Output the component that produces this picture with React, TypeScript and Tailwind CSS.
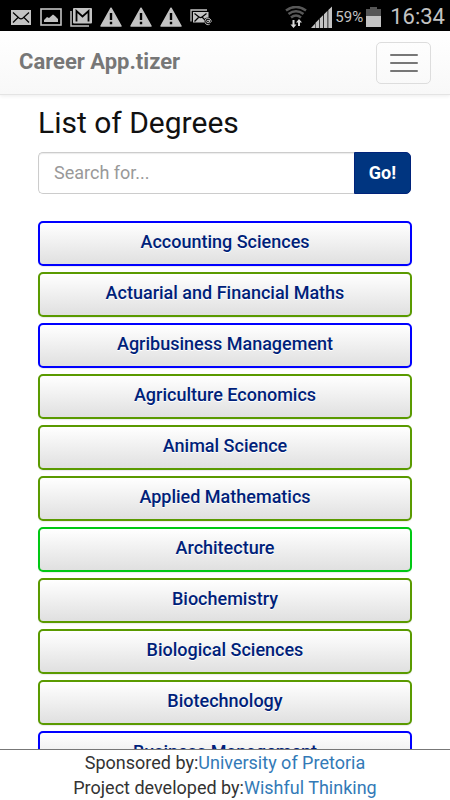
import React from 'react'

const degrees = [
  { name: 'Accounting Sciences', border: 'border-[#0000ff]' },
  { name: 'Actuarial and Financial Maths', border: 'border-[#5a9a00]' },
  { name: 'Agribusiness Management', border: 'border-[#0000ff]' },
  { name: 'Agriculture Economics', border: 'border-[#5a9a00]' },
  { name: 'Animal Science', border: 'border-[#5a9a00]' },
  { name: 'Applied Mathematics', border: 'border-[#5a9a00]' },
  { name: 'Architecture', border: 'border-[#00c814]' },
  { name: 'Biochemistry', border: 'border-[#5a9a00]' },
  { name: 'Biological Sciences', border: 'border-[#5a9a00]' },
  { name: 'Biotechnology', border: 'border-[#5a9a00]' },
  { name: 'Business Management', border: 'border-[#0000ff]' },
]

function MailIcon() {
  return (
    <svg width="20" height="16" viewBox="0 0 20 16">
      <rect width="20" height="15" y="1" fill="#c3c3c3" />
      <path d="M2 3.500l6 5.500q2 1.600 4 0l6-5.500M2 13.500l5-5M18 13.500l-5-5" fill="none" stroke="#000" strokeWidth="1.200" />
    </svg>
  )
}

function PictureIcon() {
  return (
    <svg width="22" height="18" viewBox="0 0 22 18">
      <rect x="1" y="1" width="20" height="16" fill="none" stroke="#c3c3c3" strokeWidth="1.600" />
      <path d="M4 14v-2l3-3 2 1 4-3.500 2 1.500 3 3v3z" fill="#c3c3c3" />
    </svg>
  )
}

function GmailIcon() {
  return (
    <svg width="22" height="19" viewBox="0 0 22 19">
      <path d="M1 3v15h18" fill="none" stroke="#c3c3c3" strokeWidth="1.500" />
      <rect x="3" y="0" width="19" height="15.500" rx="1" fill="#c3c3c3" />
      <path d="M6.500 13.500V3l6 5.500L18.500 3v10.500" fill="none" stroke="#000" strokeWidth="1.800" />
    </svg>
  )
}

function WarningIcon() {
  return (
    <svg width="22" height="20" viewBox="0 0 22 20">
      <path d="M11 1.200L21 19H1z" fill="#c3c3c3" stroke="#c3c3c3" strokeWidth="1.500" strokeLinejoin="round" />
      <path d="M11 6v7M11 14.800v2.400" stroke="#000" strokeWidth="2.400" />
    </svg>
  )
}

function MailAtIcon() {
  return (
    <svg width="22" height="17" viewBox="0 0 22 17">
      <path d="M1 12.500V1h16" fill="none" stroke="#c3c3c3" strokeWidth="1.300" />
      <rect x="3" y="3" width="15.500" height="10.500" fill="#c3c3c3" />
      <path d="M4.500 4.500L9 8q1.500 1.200 3 0l4.500-3.500M4.500 12.500l4-4M16 12l-4-4" fill="none" stroke="#000" strokeWidth="1.200" />
      <circle cx="18" cy="12.500" r="4" fill="#000" />
      <circle cx="18" cy="12.500" r="1.300" fill="none" stroke="#c3c3c3" />
      <path d="M19.400 11v2q1 1.200 1.800-.5a3.200 3.200 0 1 0-1.500 2.700" fill="none" stroke="#c3c3c3" />
    </svg>
  )
}

function WifiIcon() {
  return (
    <svg width="22" height="22" viewBox="0 0 22 22">
      <g fill="none" stroke="#585858" strokeWidth="2.600">
        <path d="M1 4.500q10-7 20 0" />
        <path d="M3.500 8q7.500-5.500 15 0" />
        <path d="M6 11.500q5-4 10 0" />
      </g>
      <path d="M7.500 14v4.500H5.500L8.500 22l3-3.500h-2V14zM13 20v-3.500h-2l3-3.500 3 3.500h-2V20z" fill="#d8d8d8" />
    </svg>
  )
}

function SignalIcon() {
  return (
    <svg width="21" height="22" viewBox="0 0 21 22" fill="#c3c3c3">
      <path d="M0 22l4-4.200V22zM4.500 22v-5.200L8 13.200V22zM8.700 22v-9.500l3.500-3.500v13zM13 22V8.200l3.500-3.500V22zM17.300 22V4L21 .5V22z" />
    </svg>
  )
}

function BatteryIcon() {
  return (
    <svg width="15" height="20" viewBox="0 0 15 20">
      <path d="M4 0h7v2h4v7H0V2h4z" fill="#555" />
      <path d="M0 9h15v11H0z" fill="#c3c3c3" />
    </svg>
  )
}

function StatusBar() {
  return (
    <div className="flex h-[31px] shrink-0 items-center justify-between bg-black pt-[3px] pr-[5px] pl-[11px] text-[#c3c3c3]">
      <div className="flex items-center gap-2">
        <MailIcon />
        <div className="flex gap-2 pl-px">
          <PictureIcon />
          <GmailIcon />
        </div>
        <WarningIcon />
        <WarningIcon />
        <WarningIcon />
        <MailAtIcon />
      </div>
      <div className="flex items-center">
        <WifiIcon />
        <div className="flex items-center gap-[3px] pl-1">
          <SignalIcon />
          <span className="text-[15px]">59%</span>
          <BatteryIcon />
        </div>
        <span className="pl-[9px] text-[22px] leading-6">16:34</span>
      </div>
    </div>
  )
}

function Header() {
  return (
    <header className="z-10 flex h-16 shrink-0 items-center justify-between border-b border-[#e4e4e4] bg-linear-to-b from-white to-[#f8f8f8] px-[19px] shadow-[0_1px_4px_rgba(0,0,0,0.08)]">
      <a href="#" className="pb-0.5 text-[22px] leading-7 font-bold text-[#777]">Career App.tizer</a>
      <button aria-label="Toggle navigation" className="flex h-[42px] w-[55px] flex-col items-center justify-center gap-1.5 rounded-[5px] border border-[#ddd]">
        <span className="h-0.5 w-7 rounded-sm bg-[#777]"></span>
        <span className="h-0.5 w-7 rounded-sm bg-[#777]"></span>
        <span className="h-0.5 w-7 rounded-sm bg-[#777]"></span>
      </button>
    </header>
  )
}

function App() {
  const [search, setSearch] = React.useState<string>('')
  return (
    <div className="flex h-dvh flex-col bg-white font-['Roboto','Liberation_Sans',sans-serif]">
      <StatusBar />
      <Header />
      <main className="min-h-0 flex-1 overflow-y-auto px-[38px] pt-2 [scrollbar-width:none]">
        <h1 className="text-3xl leading-10 text-[#111]">List of Degrees</h1>
        <form className="mt-[9px] mr-px flex h-[42px]" onSubmit={(e) => e.preventDefault()}>
          <input
            type="text"
            aria-label="Search for a degree"
            placeholder="Search for..."
            value={search}
            onChange={(e) => setSearch(e.target.value)}
            className="min-w-0 flex-1 rounded-l-[5px] border border-r-0 border-[#ccc] px-[15px] text-lg text-[#555] shadow-[inset_0_1px_1px_rgba(0,0,0,0.08)] placeholder:text-[#999]"
          />
          <button className="w-[57px] rounded-r-[5px] border border-[#00237a] bg-[#003580] text-lg font-bold text-white">Go!</button>
        </form>
        <ul className="mt-[27px] flex flex-col gap-1.5 pb-4">
          {degrees.map((degree) => (
            <li key={degree.name}>
              <button
                className={`h-[45px] w-full rounded-[5px] border-2 bg-linear-to-b from-white to-[#e0e0e0] pb-1 text-lg font-medium text-[#001f7a] shadow-[0_1px_1px_rgba(0,0,0,0.08)] [text-shadow:0_1px_0_#fff] ${degree.border}`}
              >
                {degree.name}
              </button>
            </li>
          ))}
        </ul>
      </main>
      <footer className="shrink-0 border-t border-[#777] text-center text-lg leading-[25px] text-[#333]">
        <p>Sponsored by:<a href="#" className="text-[#337ab7]">University of Pretoria</a></p>
        <p>Project developed by:<a href="#" className="text-[#337ab7]">Wishful Thinking</a></p>
      </footer>
    </div>
  )
}

export default App
